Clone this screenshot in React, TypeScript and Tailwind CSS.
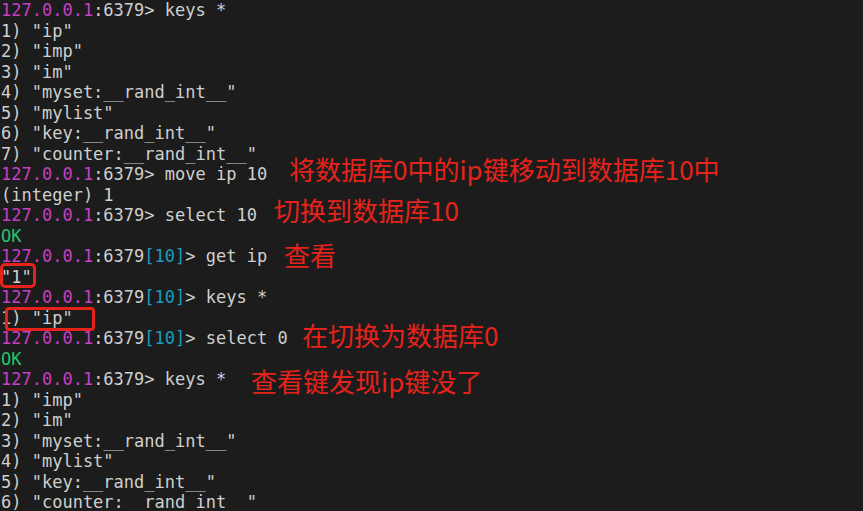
const P = () => <span className="text-[#c83ec4]">127.0.0.1</span>;
const DB = () => <span className="text-[#1b9cbc]">[10]</span>;

type Line = React.ReactNode;

const lines: Line[] = [
  <><P />:6379&gt; keys *</>,
  '1) "ip"',
  '2) "imp"',
  '3) "im"',
  '4) "myset:__rand_int__"',
  '5) "mylist"',
  '6) "key:__rand_int__"',
  '7) "counter:__rand_int__"',
  <><P />:6379&gt; move ip 10</>,
  '(integer) 1',
  <><P />:6379&gt; select 10</>,
  <span className="text-[#25c46c]">OK</span>,
  <><P />:6379<DB />&gt; get ip</>,
  '"1"',
  <><P />:6379<DB />&gt; keys *</>,
  '1) "ip"',
  <><P />:6379<DB />&gt; select 0</>,
  <span className="text-[#25c46c]">OK</span>,
  <><P />:6379&gt; keys *</>,
  '1) "imp"',
  '2) "im"',
  '3) "myset:__rand_int__"',
  '4) "mylist"',
  '5) "key:__rand_int__"',
  '6) "counter:__rand_int__"',
];

const notes = [
  { text: '将数据库0中的ip键移动到数据库10中', cls: 'left-[289px] top-[156px]' },
  { text: '切换到数据库10', cls: 'left-[274px] top-[197px]' },
  { text: '查看', cls: 'left-[284px] top-[242px]' },
  { text: '在切换为数据库0', cls: 'left-[302px] top-[322px]' },
  { text: '查看键发现ip键没了', cls: 'left-[251px] top-[368px]' },
];

export default function App() {
  return (
    <div className="relative w-[863px] h-[511px] overflow-hidden bg-[#1c1c1c]">
      <div className="pl-px font-['DejaVu_Sans_Mono',monospace] text-[17px] leading-[20.5px] text-[#cfcfcf] whitespace-pre">
        {lines.map((l, i) => (
          <div key={i}>{l}</div>
        ))}
      </div>

      {notes.map((n) => (
        <div
          key={n.text}
          className={`absolute ${n.cls} font-['Noto_Sans_CJK_SC','Noto_Sans',sans-serif] text-[26px] leading-[26px] text-[#e5231b] whitespace-nowrap`}
        >
          {n.text}
        </div>
      ))}

      <div className="absolute left-0 top-[263px] w-[36px] h-[25px] rounded-[5px] border-[3px] border-[#e5231b]" />
      <div className="absolute left-[5px] top-[307px] w-[90px] h-[24px] rounded-[4px] border-[3px] border-[#e5231b]" />
    </div>
  );
}
